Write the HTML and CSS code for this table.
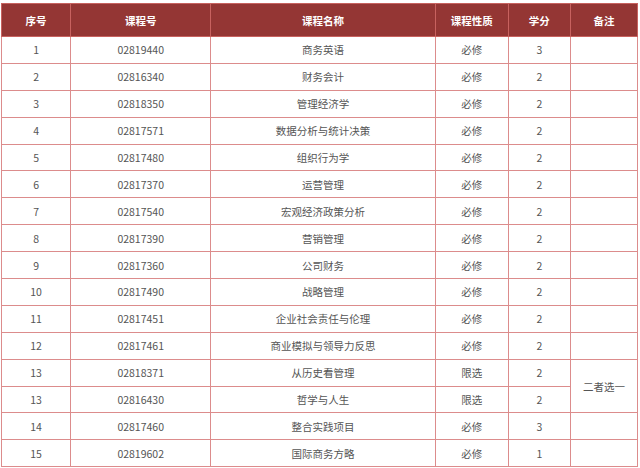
FILE: index.html
```html
<!DOCTYPE html>
<html lang="zh">
<head>
<meta charset="utf-8">
<link rel="stylesheet" href="styles.css">
</head>
<body>
<div class="wrap">
<table class="courses">
<colgroup>
<col class="c1"><col class="c2"><col class="c3"><col class="c4"><col class="c5"><col class="c6">
</colgroup>
<thead>
<tr><th>序号</th><th>课程号</th><th>课程名称</th><th>课程性质</th><th>学分</th><th>备注</th></tr>
</thead>
<tbody>
<tr><td>1</td><td>02819440</td><td>商务英语</td><td>必修</td><td>3</td><td></td></tr>
<tr><td>2</td><td>02816340</td><td>财务会计</td><td>必修</td><td>2</td><td></td></tr>
<tr><td>3</td><td>02818350</td><td>管理经济学</td><td>必修</td><td>2</td><td></td></tr>
<tr><td>4</td><td>02817571</td><td>数据分析与统计决策</td><td>必修</td><td>2</td><td></td></tr>
<tr><td>5</td><td>02817480</td><td>组织行为学</td><td>必修</td><td>2</td><td></td></tr>
<tr><td>6</td><td>02817370</td><td>运营管理</td><td>必修</td><td>2</td><td></td></tr>
<tr><td>7</td><td>02817540</td><td>宏观经济政策分析</td><td>必修</td><td>2</td><td></td></tr>
<tr><td>8</td><td>02817390</td><td>营销管理</td><td>必修</td><td>2</td><td></td></tr>
<tr><td>9</td><td>02817360</td><td>公司财务</td><td>必修</td><td>2</td><td></td></tr>
<tr><td>10</td><td>02817490</td><td>战略管理</td><td>必修</td><td>2</td><td></td></tr>
<tr><td>11</td><td>02817451</td><td>企业社会责任与伦理</td><td>必修</td><td>2</td><td></td></tr>
<tr><td>12</td><td>02817461</td><td>商业模拟与领导力反思</td><td>必修</td><td>2</td><td></td></tr>
<tr><td>13</td><td>02818371</td><td>从历史看管理</td><td>限选</td><td>2</td><td rowspan="2">二者选一</td></tr>
<tr><td>13</td><td>02816430</td><td>哲学与人生</td><td>限选</td><td>2</td></tr>
<tr><td>14</td><td>02817460</td><td>整合实践项目</td><td>必修</td><td>3</td><td></td></tr>
<tr><td>15</td><td>02819602</td><td>国际商务方略</td><td>必修</td><td>1</td><td></td></tr>
</tbody>
</table>
</div>
</body>
</html>
```

FILE: styles.css
```css
html, body {
  margin: 0;
  padding: 0;
  background: #ffffff;
}
.wrap {
  padding: 3px 2px 0 1px;
}
.courses {
  width: 637px;
  table-layout: fixed;
  border-collapse: collapse;
  border: 1px solid #e6a9a9;
  font-family: "Noto Sans CJK SC", "Noto Sans", sans-serif;
  font-size: 10.5px;
  color: #555555;
}
.c1 { width: 69px; }
.c2 { width: 140px; }
.c3 { width: 224px; }
.c4 { width: 73px; }
.c5 { width: 62px; }
.c6 { width: 67px; }
.courses th,
.courses td {
  border: 1px solid #dc8c8c;
  text-align: center;
  vertical-align: middle;
  padding: 0;
}
.courses th {
  background: #943634;
  color: #ffffff;
  font-weight: bold;
  height: 32px;
  border-color: #c8625f;
}
.courses td {
  height: 25.9px;
}
```
